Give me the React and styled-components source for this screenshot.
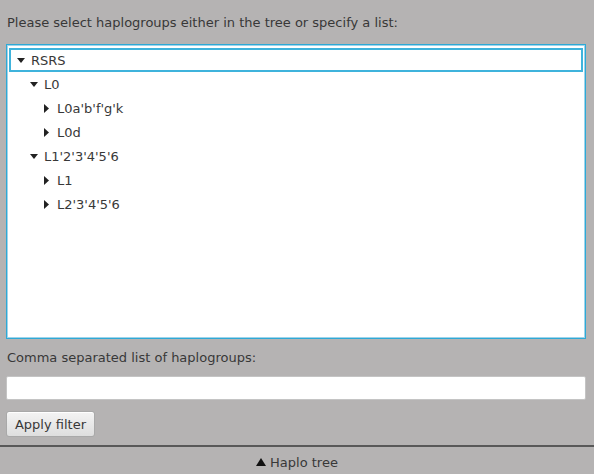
import React from 'react';
import styled, { createGlobalStyle } from 'styled-components';

const GlobalStyle = createGlobalStyle`
    html, body { margin: 0; padding: 0; }
    body {
        background: #b5b3b3;
        font-family: "DejaVu Sans", sans-serif;
        font-size: 13px;
        color: #383838;
    }
`;

const tree = [
    { label: 'RSRS', depth: 0, open: true, selected: true },
    { label: 'L0', depth: 1, open: true },
    { label: "L0a'b'f'g'k", depth: 2, open: false },
    { label: 'L0d', depth: 2, open: false },
    { label: "L1'2'3'4'5'6", depth: 1, open: true },
    { label: 'L1', depth: 2, open: false },
    { label: "L2'3'4'5'6", depth: 2, open: false },
];

const StyledPage = styled.div`
    width: 594px;
    height: 474px;
    display: flex;
    flex-direction: column;
`;

const StyledContent = styled.div`
    flex: 1;
    display: flex;
    flex-direction: column;
    padding: 13px 8px 0 6px;
`;

const StyledLabel = styled.div`
    height: 20px;
    line-height: 20px;
    padding-left: 1px;
    margin-bottom: ${props => props.gap}px;
`;

const StyledTree = styled.div`
    height: 295px;
    background: #fff;
    border: 1px solid #2ea9d6;
    box-shadow: inset 0 0 0 1px #9fd4ea;
    padding: 3px 2px;
    box-sizing: border-box;
    margin-bottom: 9px;
`;

const StyledRow = styled.div`
    display: flex;
    align-items: center;
    height: 24px;
    box-sizing: border-box;
    padding-left: ${props => 6 + props.depth * 13}px;
    border: ${props => props.selected ? '2px solid #3fb3dc' : '2px solid transparent'};

    .row__arrow {
        width: 14px;
        display: flex;
        align-items: center;
    }
`;

const StyledInput = styled.div`
    height: 24px;
    background: #fff;
    border: 1px solid #c4c4c4;
    border-radius: 2px;
    box-sizing: border-box;
    margin-bottom: 11px;
`;

const StyledButton = styled.button`
    align-self: flex-start;
    width: 89px;
    height: 26px;
    font-family: inherit;
    font-size: 13px;
    color: #383838;
    background: linear-gradient(#f4f4f4, #dedede);
    border: 1px solid #a9a9a9;
    border-radius: 3px;
    box-shadow: inset 0 1px 0 #fff;
    padding: 0;
`;

const StyledFooter = styled.div`
    height: 29px;
    border-top: 2px solid #585858;
    display: flex;
    align-items: center;
    justify-content: center;
    gap: 4px;
    padding-top: 3px;
    box-sizing: border-box;
`;

const Arrow = ({ open }) => (
    <svg width="9" height="9" viewBox="0 0 9 9">
        {open
            ? <polygon points="0,2 8,2 4,7" fill="#222" />
            : <polygon points="1,0 6,4.5 1,9" fill="#222" />}
    </svg>
);

const App = () => (
    <StyledPage>
        <GlobalStyle />
        <StyledContent>
            <StyledLabel gap={11}>Please select haplogroups either in the tree or specify a list:</StyledLabel>
            <StyledTree>
                {tree.map(node => (
                    <StyledRow key={node.label} depth={node.depth} selected={node.selected}>
                        <span className="row__arrow"><Arrow open={node.open} /></span>
                        <span>{node.label}</span>
                    </StyledRow>
                ))}
            </StyledTree>
            <StyledLabel gap={8}>Comma separated list of haplogroups:</StyledLabel>
            <StyledInput />
            <StyledButton>Apply filter</StyledButton>
        </StyledContent>
        <StyledFooter>
            <svg width="10" height="8" viewBox="0 0 10 8"><polygon points="0,8 5,0 10,8" fill="#111" /></svg>
            <span>Haplo tree</span>
        </StyledFooter>
    </StyledPage>
);

export default App;
